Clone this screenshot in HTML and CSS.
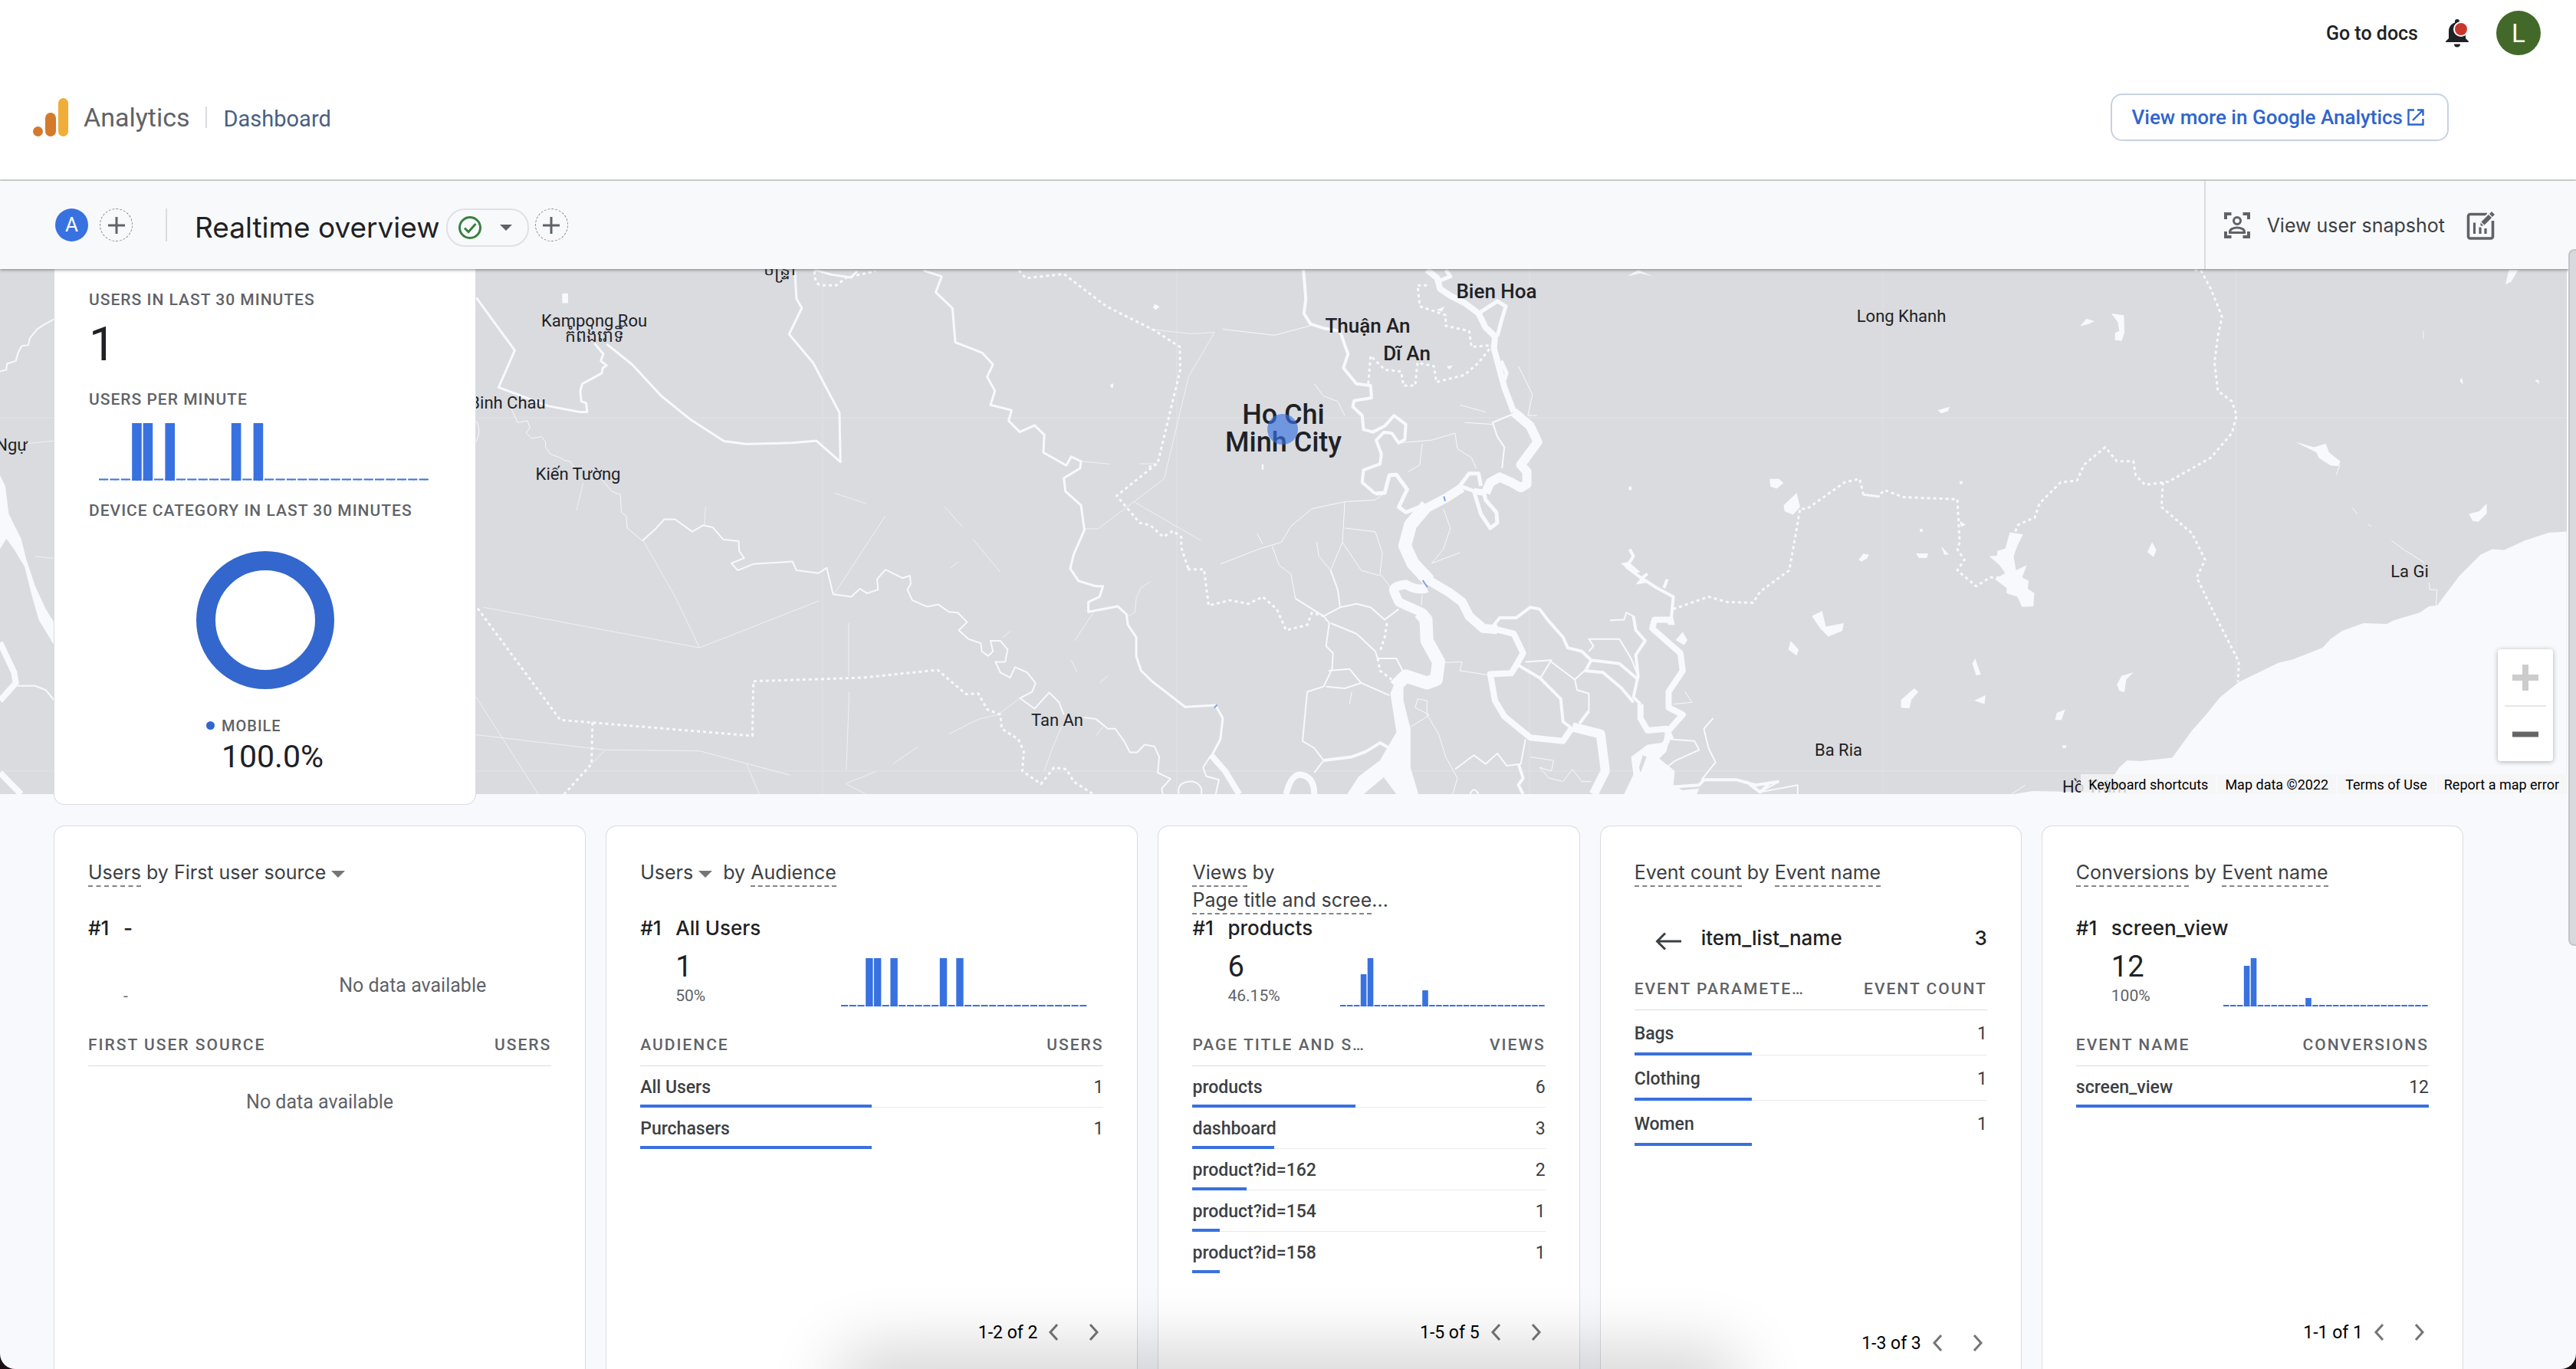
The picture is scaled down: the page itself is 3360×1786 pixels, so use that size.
FILE: index.html
```html
<!DOCTYPE html>
<html lang="en">
<head>
<meta charset="utf-8">
<meta name="viewport" content="width=device-width, initial-scale=1">
<title>Analytics - Realtime overview</title>
<link rel="stylesheet" href="styles.css">
</head>
<body>
<div class="window">
  <header class="masthead">
    <div class="account-bar">
      <a class="docs-link" href="#docs">Go to docs</a>
      <button class="icon-button" type="button" aria-label="Notifications">
        <svg width="30" height="38" viewBox="0 0 30 38"><path fill="#202124" d="M15 1a3 3 0 0 1 3 3v1.500C23 7 26 11.500 26 17v9l4 4v1H0v-1l4-4v-9C4 11.500 7 7 12 5.500V4a3 3 0 0 1 3-3zM11 33.500h8a4 4 0 0 1-8 0z"/><circle cx="20" cy="14" r="10" fill="#fff"/><circle cx="20" cy="14" r="8" fill="#c9372c"/></svg>
      </button>
      <button class="profile" type="button" aria-label="Profile">L</button>
    </div>
    <div class="brand-bar">
      <svg width="46" height="50" viewBox="0 0 46 50"><rect x="33" width="13" height="50" rx="6.500" fill="#f0ad3a"/><rect x="16" y="19" width="14" height="31" rx="7" fill="#d5792c"/><circle cx="6.500" cy="43.500" r="6.500" fill="#d5792c"/></svg>
      <span class="brand-name">Analytics</span>
      <span class="brand-rule"></span>
      <a class="brand-section" href="#dashboard">Dashboard</a>
      <a class="more-link" href="#analytics">View more in Google Analytics
        <svg width="22" height="22" viewBox="0 0 22 22" fill="none" stroke="#2f65cc" stroke-width="2.400"><path d="M9 1.500H1.500v19h19V13M13 1.500h7.500V9M20.500 1.500 7 15"/></svg>
      </a>
    </div>
  </header>

  <div class="toolbar">
    <span class="segment">A</span>
    <button class="add" type="button" aria-label="Add comparison"><svg width="22" height="22" viewBox="0 0 22 22" stroke="#5f6368" stroke-width="3"><path d="M11 0v22M0 11h22"/></svg></button>
    <span class="toolbar-rule"></span>
    <h1>Realtime overview</h1>
    <button class="status" type="button" aria-label="Data quality">
      <svg width="30" height="30" viewBox="0 0 30 30" fill="none" stroke="#388043" stroke-width="3"><circle cx="15" cy="15" r="13.500"/><path d="M8 15.500l5 5L22.500 10"/></svg>
      <svg width="16" height="8" viewBox="0 0 16 8"><path fill="#5f6368" d="M0 0h16L8 8z"/></svg>
    </button>
    <button class="add" type="button" aria-label="Add card"><svg width="22" height="22" viewBox="0 0 22 22" stroke="#5f6368" stroke-width="3"><path d="M11 0v22M0 11h22"/></svg></button>
    <div class="tools">
      <button class="snapshot" type="button">
        <svg width="34" height="34" viewBox="0 0 34 34" fill="none" stroke="#5f6368" stroke-width="3"><path stroke-width="4" d="M2 9V2h7.500M24.500 2H32v7M32 25v7h-7.500M9.500 32H2v-7"/><circle cx="17" cy="11" r="4.500"/><path d="M7.500 26.500v-1c0-3.500 5-5.500 9.500-5.500s9.500 2 9.500 5.500v1z"/></svg>
        View user snapshot
      </button>
      <button class="icon-button" type="button" aria-label="Customize report">
        <svg width="37" height="38" viewBox="0 0 37 38" fill="none" stroke="#5f6368" stroke-width="3.600"><path d="M27 4.500H5a2.500 2.500 0 0 0-2.500 2.500V33.500A2.500 2.500 0 0 0 5 36h27a2.500 2.500 0 0 0 2.500-2.500V13"/><path stroke-width="3.200" d="M10.500 15.500v14.500M18 21.500V30M25 23v7"/><path stroke="#f8f9fb" stroke-width="10" d="M18 20 36 2"/><path stroke-width="6" d="M21.500 16.500 31 7"/><path fill="#5f6368" stroke="none" d="M18.500 15.500v4h4z"/><path stroke-width="5.500" d="M32 6 35 3"/></svg>
      </button>
    </div>
  </div>

  <main class="stage">
    <section class="map" aria-label="Users by location">
      <svg class="map-canvas" viewBox="0 351 3348 685" preserveAspectRatio="xMidYMid slice">
        <rect class="land" y="351" width="3348" height="685"/>
        <path class="tile" d="M0 545H3348M0 1006H3348M1073 351V1036M1535 351V1036M1995 351V1036M2456 351V1036M2917 351V1036"/>
        <g transform="translate(0 340) scale(.4592)">
          <path class="w3" d="M0 315 18 310 20 293 45 285 52 260 62 242 80 240 85 220 105 195 125 182 155 165"/>
          <path class="w1" d="M72 520 155 512M100 840 155 846"/>
          <path class="water" d="M0 610 15 640 25 720 60 790 75 850 100 925 130 990 155 1030V1095L110 1020 90 950 70 870 40 820 18 790 0 820Z"/>
          <path class="w8" d="M0 1085 40 1170 45 1200 0 1250M0 1455 60 1516"/>
          <path class="w3" d="M50 1208 100 1208 130 1220 155 1250"/>
        </g>
        <g transform="translate(600 340) scale(.6378 .4592)">
          <path class="w4" d="M33 105 112 255 79 360 180 413 245 430 260 430 258 405 248 400 246 370 250 350 270 335 290 320 292 305 300 298 288 285 293 265 275 235M300 237 352 295 412 385 470 450 540 513 585 521 680 518 729 512 778 572 776 432 722 290 673 209 699 135 688 108 685 30M725 26 760 40 800 48 812 30"/>
          <path class="w2" d="M33 455Q45 480 33 515M103 415 118 460 138 455 143 475 135 490 147 505 167 500 175 515 175 530 185 550 205 560 215 568 225 570 238 600M290 622 310 655 328 665 330 715 340 725 342 760 373 796"/>
          <path class="w3" d="M373 796 400 762 418 735 440 735 475 770 497 752 517 758 538 792 570 797 571 825 581 845 555 860 568 880 600 862 680 855 688 880 733 888 750 873 763 948 800 955 818 932 832 945 855 935 853 905 870 878 905 902 920 895 922 918 915 935 925 965 955 983 978 977 1000 998 1018 1000 1037 1027 1020 1050 1040 1075 1065 1087 1067 1110 1080 1123 1090 1110 1085 1080 1105 1080 1120 1105 1115 1140 1095 1140 1105 1170 1125 1185 1135 1155 1160 1170 1177 1200 1170 1225 1145 1243 1175 1273 1190 1250 1205 1227 1225 1255 1235 1290M1275 1298 1300 1302 1325 1330 1340 1330 1358 1365 1370 1397 1385 1397 1400 1375 1420 1380 1430 1410 1427 1455 1453 1472 1435 1500 1437 1516M1470 1516Q1465 1478 1500 1480Q1520 1490 1516 1516"/>
          <path class="w4" d="M948 28 985 45 973 90 1007 135 1013 232 1068 262 1090 295 1078 330 1094 370 1085 410 1128 425 1122 455 1145 487 1175 468 1195 495 1193 545 1240 582 1250 557 1270 570 1268 590 1235 618 1238 655 1270 695 1277 765 1255 835 1248 875 1265 910 1300 925 1315 925 1308 955 1285 970 1285 998 1345 982 1363 1005 1366 1035 1383 1070 1383 1125 1393 1165 1415 1195 1455 1238 1483 1268 1545 1263 1560 1300 1555 1360 1538 1405"/>
          <path class="dots" d="M725 30Q725 70 740 70L770 70 790 48 850 30M1143 28 1157 50 1235 38 1322 130 1420 198 1472 245 1473 310 1427 575 1343 668 1390 745 1412 752 1438 785 1458 768 1475 785 1475 815 1490 877M36 988 205 1305 598 1350 600 1195 822 1185 977 1163 1035 1232 1060 1230 1078 1275 1105 1290 1108 1330 1142 1360 1153 1395 1150 1450 1188 1487 1215 1440 1240 1445 1255 1480 1295 1516M271 1312 269 1430 213 1516"/>
          <path class="w1" d="M48 985 490 1100 735 966M375 796 440 955 490 1100M33 1240 160 1516M33 1347 296 1390 490 1393 675 1462M870 725 765 948M990 698 1028 757M1048 790 1105 885M765 660 830 690M252 632 238 710M502 700 500 750M795 1030V1180M796 1225 790 1447M296 1392 269 1430M586 1430 612 1516M1270 570 1330 578M1390 577H1425M1412 195 1495 208 1543 204 1490 330 1440 620 1305 762 1278 762M1378 685 1515 795M1296 998 1257 1080M1412 912 1392 930 1383 960 1380 1000 1366 1010M1230 1325 1210 1390 1195 1450M1145 1243 1100 1290 1060 1303 1000 1345M935 1383 885 1430M1250 1135 1262 1170M1315 1325 1300 1350M1020 855 1003 873M1125 1053 1108 1073M1325 1180 1308 1200M790 1485 850 1452M790 1487 830 1516"/>
          <path class="water" d="M209 93h12v28h-12zM1422 124l8 6-7 10-6-7zM1330 352l6-3v12h-5zM1408 582l7 0-5 12z"/>
        </g>
        <g transform="translate(1500 340) scale(.6122 .4592)">
          <path class="w5" d="M327 26 332 110 328 150 342 180 370 192 405 200 415 240 422 265 412 305 440 350 470 355 472 390 435 398 432 415 452 440 455 480 475 487 500 470 520 440 545 465 543 508 530 518 515 490 498 488 482 510 493 550 490 578 455 595 452 630 480 662"/>
          <path class="w6" d="M480 662 500 660 510 610 525 608 548 650 530 700 545 715 575 700M630 26 640 45 612 60M700 150 740 115 758 130 750 165 740 215M690 655 660 640 680 605 700 605 705 640M690 655 705 720 725 760 740 745 738 715 715 680 712 660M748 285 760 320 752 350"/>
          <path class="w8" d="M590 26 612 50 618 80 640 100 670 120 700 150 715 190 735 215 733 250 745 310 755 360 775 430M715 660 690 655M730 1045 775 1060 795 1115 780 1150 770 1172 725 1175 735 1250 755 1295 810 1355 880 1365 900 1325"/>
          <path class="w12" d="M775 430 810 470 826 515 790 580 803 600 803 635 790 645 770 630 745 615 725 630 715 660M665 645 630 675 580 710M590 905 640 945 665 970 680 1010 710 1045 740 1048M590 930Q570 940 545 920Q515 925 520 940L530 970 580 1000M900 1325 960 1345 970 1450 945 1516"/>
          <path class="w17" d="M590 695 555 750 543 810 560 860 595 910M575 1000 588 1020 590 1080 615 1140 610 1190 590 1200 545 1180 522 1210"/>
          <path class="water" d="M512 1230 520 1205 540 1200 540 1250 555 1330 555 1440 572 1516H525L498 1468 455 1516H420L445 1465 490 1420 505 1385 525 1340ZM1025 1410 1060 1375 1090 1370 1110 1345 1100 1395 1085 1415 1118 1450 1115 1490 1135 1505 1170 1500 1165 1516H1010L1030 1460Z"/>
          <path class="land" d="M1050 1405 1058 1410 1045 1455 1042 1440Z"/>
          <path class="w8" d="M1100 1370 1105 1335 1135 1290 1105 1270 1105 1225 1135 1165 1130 1115 1100 1080 1070 1045 1075 1020 1110 1020M1110 1360 1100 1330 1060 1335 1045 1300 1045 1260"/>
          <path class="w5" d="M1045 1260 1030 1240 1040 1180 1035 1120 1055 1080 1035 1050 1030 1010M1110 1025 1115 955 1080 930 1045 900 1015 870 1030 840 1022 820M1045 905 1060 890M1095 930 1102 905M730 1040 745 1015 780 1015 810 985 830 990 850 1025 880 1070 890 1100 920 1110 940 1135 930 1160M935 1280 915 1315M940 1135 1000 1145 1040 1190M925 1165 965 1170 1005 1215 1030 1255M785 1150 830 1185 875 1245 880 1310 895 1325M370 1420 430 1410 460 1395 490 1370 510 1385M785 1430 795 1470 785 1490 795 1516M1115 1495 1170 1490 1180 1475 1250 1475 1290 1490 1340 1480M1270 1480 1300 1510 1320 1485"/>
          <path class="w8" d="M290 1516Q300 1460 320 1460Q350 1465 350 1516M130 1405 160 1450 190 1516"/>
          <path class="w3" d="M930 1160 905 1190 910 1220 935 1230 935 1280M1030 1010 1015 1000 1010 1020 980 1022M935 1110 945 1095 935 1075 1000 1075 1025 1130 1040 1180M830 1190 855 1135 800 1140M855 1140 905 1190M382 1030 375 1095 390 1115 388 1160 370 1210 335 1225 325 1365 350 1385 370 1420 350 1455M370 1010 382 1030M385 1030 440 1060 480 1110 485 1130 525 1130 540 1170M405 985 440 975 470 985 500 1020 530 990M375 1210 415 1215 450 1200 510 1235M380 1165 425 1160 450 1200M310 960 370 1010 405 985 400 935 385 880M1175 1475 1205 1425 1190 1385 1180 1330 1200 1300M650 1445 690 1405 715 1430 740 1400 760 1435 790 1430 800 1360M130 1405 113 1440 120 1465 147 1475 140 1516M775 435 730 460 740 500 755 530 750 590M1110 1360 1160 1365 1170 1390 1120 1420 1100 1440M682 1516Q690 1490 700 1516M1340 1480 1300 1510 1380 1490 1380 1516"/>
          <path class="w2" d="M150 862 235 818 280 800 300 755 345 705 415 685 480 680 500 660M260 810 275 865 300 890 310 960M385 880 410 800 415 685M415 760 480 770 495 830 490 890 520 940M410 800 450 880 490 895M355 800 360 840 385 880M530 518 600 510 650 490 655 535 685 560 695 590M580 520 575 580 550 600M785 300 800 340 815 380 805 440 825 440M625 705 640 760 625 820 600 860 660 830M350 350 370 385 400 400 415 440M155 195 265 212 342 185M620 1142 665 1140 660 1165 725 1178M555 1325 585 1300 595 1290 565 1270 570 1245 590 1250 590 1290 615 1345 630 1410 655 1470 645 1516M810 1410 860 1420 855 1450 830 1440 850 1470 880 1480 900 1445 920 1480 940 1480M1115 1260 1155 1255 1140 1225M660 410 715 430M670 460 730 465M240 805 228 775M425 1260 430 1225M580 950 578 980"/>
          <path class="dots" d="M590 70 570 70 575 130 630 155 630 185 680 200 685 245 730 240 700 290 670 325 610 345 605 300 570 290 565 355 540 355 535 315 500 310 470 270 465 350M80 877 115 877 125 980 170 965 210 975 240 955 270 990 290 1050 335 1035 345 1000 370 1010M1115 990 1190 955 1230 970 1285 972 1300 940 1362 880 1378 760 1385 705 1400 705 1480 630 1512 620 1520 665 1555 670M505 1030 500 1070 490 1110M485 1130 490 1165 515 1190"/>
          <path class="water" d="M1320 620 1340 620 1350 632 1335 648 1322 642ZM1350 695 1378 660 1385 700 1370 722 1352 712ZM1410 1010 1432 995 1440 1040 1478 1030 1475 1052 1445 1068 1428 1045ZM1365 1080 1382 1105 1378 1122 1360 1105ZM1510 848 1530 832 1528 846 1516 855ZM1120 1078 1135 1055 1145 1078 1138 1092ZM1003 860 1020 856 1045 885 1030 888ZM1035 920 1050 895 1060 915ZM1095 1015 1115 1015 1118 1035 1105 1035ZM8 124 20 132 12 140ZM632 300 645 298 638 310ZM610 140 628 130 622 145ZM1018 44 1040 26 1070 44 1045 36ZM1020 642h6v10h-6zM238 578h4v16h-4z"/>
          <path class="bridge" d="M626 670 629 683M581 908 591 928M137 1270 143 1262"/>
        </g>
        <g transform="translate(2400 340) scale(.6122 .4592)">
          <path class="water" d="M1548 770 1510 773 1460 795 1415 822 1390 820 1365 835 1320 895 1272 980 1255 982 1235 1000 1180 1022 1165 1032 1115 1030 1070 1052 1045 1075 1028 1100 965 1133 935 1142 850 1197 810 1240 780 1290 750 1335 708 1412 640 1422 612 1420 595 1440 575 1480 540 1510 410 1507 370 1516H1548Z"/>
          <path class="water" d="M362 772 390 778 378 810 370 840 375 880 398 865 388 900 402 910 400 932 414 945 412 982 388 984 378 955 355 945 355 930 330 905 352 888 340 865 318 840 335 838 335 825 352 818ZM512 186 525 165 542 172 530 180ZM578 150 605 155 606 205 600 228 586 226 586 205 595 200 592 175ZM970 515 1010 530 1035 520 1042 545 1066 570 1062 584 1045 582 1020 560 1015 545ZM1340 720 1362 712 1378 690 1378 718 1360 742 1348 740ZM665 800 674 822 668 842 655 828ZM130 1270 130 1248 158 1215 167 1225 152 1248 148 1272ZM595 1222 590 1205 600 1180 625 1170 610 1190 606 1226ZM286 1250 310 1235 308 1260ZM458 1305 462 1285 480 1275 472 1305ZM1418 68 1425 26H1445L1430 60ZM208 425 234 415 230 428 216 434ZM162 832 188 832 185 845 168 845ZM216 812 232 835 222 835ZM282 1145 288 1130 300 1176 290 1178ZM40 850 50 832 62 838 46 855ZM1320 342 1325 332 1328 352ZM1480 340 1488 338 1490 350ZM255 740 268 750 258 757ZM170 762h6v9h-6zM255 626h6v9h-6zM474 1377h8v8h-8z"/>
          <path class="w2" d="M1175 795 1200 820 1245 858M1255 915 1257 935 1272 935 1270 980M1092 702 1102 720M1125 748 1132 756M1065 580 1057 610M1243 222V200M395 1490 365 1516"/>
          <path class="dots" d="M50 665 80 670 95 652 135 672 250 678 255 800 250 820 265 850 250 880 290 925 320 900 340 900M755 26 770 30 790 80 814 160 805 215 798 290 805 370 835 400 845 440 835 490 790 560 700 628 650 637 630 610 625 570 590 570 565 530 520 580 505 625 470 630 425 690 415 730 380 750 370 780M688 630 685 700 750 775 778 850 760 900 800 1010 850 1140 848 1197"/>
        </g>
        <g class="place">
          <text x="1017" y="359">ចន្ទ្រា</text>
          <text x="775" y="426">Kampong Rou</text>
          <text x="775" y="446">កំពង់រោទិ៍</text>
          <text x="662" y="533">Binh Chau</text>
          <text x="754" y="626">Kiến Tường</text>
          <text x="1379" y="947">Tan An</text>
          <text x="2480" y="420">Long Khanh</text>
          <text x="3143" y="753">La Gi</text>
          <text x="2398" y="986">Ba Ria</text>
          <text x="2732" y="1034">Hồ Tràm</text>
          <text x="-14" y="588">Hồng Ngự</text>
        </g>
        <g class="place town">
          <text x="1952" y="389">Bien Hoa</text>
          <text x="1784" y="434">Thuận An</text>
          <text x="1835" y="470">Dĩ An</text>
        </g>
        <g class="place city">
          <text x="1674" y="553">Ho Chi</text>
          <text x="1674" y="589">Minh City</text>
        </g>
        <circle cx="1673" cy="560" r="20" fill="#3871e0" fill-opacity=".65"/>
      </svg>

      <div class="zoom-control">
        <button type="button" aria-label="Zoom in" disabled><svg width="34" height="34" viewBox="0 0 34 34" stroke="#ccc" stroke-width="8"><path d="M17 0v34M0 17h34"/></svg></button>
        <button type="button" aria-label="Zoom out"><svg width="34" height="34" viewBox="0 0 34 34" stroke="#666" stroke-width="7"><path d="M0 17h34"/></svg></button>
      </div>
      <div class="attribution">
        <button type="button">Keyboard shortcuts</button>
        <span>Map data ©2022</span>
        <a href="#terms">Terms of Use</a>
        <a href="#report">Report a map error</a>
      </div>

      <section class="overview">
        <h2>Users in last 30 minutes</h2>
        <p class="total">1</p>
        <h2>Users per minute</h2>
        <svg class="minutes" viewBox="0 0 600 76" preserveAspectRatio="none">
          <path class="ticks" d="M8.500 75.500H600"/>
          <path class="baseline" d="M0 73.500H600"/>
          <path class="bars" d="M60 0h17.500v75H60zM80 0h17.500v75H80zM120 0h17.500v75H120zM240 0h17.500v75H240zM280 0h17.500v75H280z"/>
        </svg>
        <h2>Device category in last 30 minutes</h2>
        <svg class="donut" width="180" height="180" viewBox="0 0 180 180"><circle cx="90" cy="90" r="77.500" fill="none" stroke="#3367cd" stroke-width="25"/></svg>
        <div class="legend">
          <span class="legend-dot"></span>
          <div><span class="legend-name">Mobile</span><span class="legend-value">100.0%</span></div>
        </div>
      </section>
    </section>

    <div class="cards">
      <section class="card wide">
        <h3><span class="term">Users</span> by First user source <svg class="caret" width="18" height="9" viewBox="0 0 18 9"><path fill="#757575" d="M0 0h18L9 9z"/></svg></h3>
        <p class="leader"><span class="rank">#1</span>-</p>
        <div class="stat"><p><span class="value">&nbsp;</span><span class="share">-</span></p><p class="chart empty">No data available</p></div>
        <table><thead><tr><th>First user source</th><th>Users</th></tr></thead></table>
        <p class="empty">No data available</p>
      </section>

      <section class="card wide">
        <h3>Users <svg class="caret" width="18" height="9" viewBox="0 0 18 9"><path fill="#757575" d="M0 0h18L9 9z"/></svg>&nbsp; by <span class="term">Audience</span></h3>
        <p class="leader"><span class="rank">#1</span>All Users</p>
        <div class="stat"><p><span class="value">1</span><span class="share">50%</span></p>
          <svg class="chart" viewBox="0 0 600 63" preserveAspectRatio="none"><path class="baseline" d="M0 62H600"/><path class="bars" d="M60 0h17.500v63H60zM80 0h17.500v63H80zM120 0h17.500v63H120zM240 0h17.500v63H240zM280 0h17.500v63H280z"/></svg></div>
        <table>
          <thead><tr><th>Audience</th><th>Users</th></tr></thead>
          <tbody>
            <tr><td>All Users<span class="bar" style="width:50%"></span></td><td>1</td></tr>
            <tr><td>Purchasers<span class="bar" style="width:50%"></span></td><td>1</td></tr>
          </tbody>
        </table>
        <nav class="pager">1-2 of 2
          <button type="button" aria-label="Previous"><svg width="14" height="22" viewBox="0 0 14 22"><path d="M12 1 3 11l9 10"/></svg></button>
          <button type="button" aria-label="Next"><svg width="14" height="22" viewBox="0 0 14 22"><path d="m2 1 9 10-9 10"/></svg></button>
        </nav>
      </section>

      <section class="card">
        <h3><span class="term">Views</span> by<br><span class="term">Page title and scree</span>…</h3>
        <p class="leader"><span class="rank">#1</span>products</p>
        <div class="stat"><p><span class="value">6</span><span class="share">46.15%</span></p>
          <svg class="chart" viewBox="0 0 600 63" preserveAspectRatio="none"><path class="baseline" d="M0 62H600"/><path class="bars" d="M60 21h17v42H60zM80 0h17v63H80zM240 42h17v21H240z"/></svg></div>
        <table>
          <thead><tr><th>Page title and s…</th><th>Views</th></tr></thead>
          <tbody>
            <tr><td>products<span class="bar" style="width:46.15%"></span></td><td>6</td></tr>
            <tr><td>dashboard<span class="bar" style="width:23.08%"></span></td><td>3</td></tr>
            <tr><td>product?id=162<span class="bar" style="width:15.38%"></span></td><td>2</td></tr>
            <tr><td>product?id=154<span class="bar" style="width:7.69%"></span></td><td>1</td></tr>
            <tr><td>product?id=158<span class="bar" style="width:7.69%"></span></td><td>1</td></tr>
          </tbody>
        </table>
        <nav class="pager">1-5 of 5
          <button type="button" aria-label="Previous"><svg width="14" height="22" viewBox="0 0 14 22"><path d="M12 1 3 11l9 10"/></svg></button>
          <button type="button" aria-label="Next"><svg width="14" height="22" viewBox="0 0 14 22"><path d="m2 1 9 10-9 10"/></svg></button>
        </nav>
      </section>

      <section class="card drilled">
        <h3><span class="term">Event count</span> by <span class="term">Event name</span></h3>
        <div class="drill">
          <button class="icon-button" type="button" aria-label="Back"><svg width="34" height="24" viewBox="0 0 34 24" fill="none" stroke="#3c4043" stroke-width="3"><path d="M34 12H3M13 1.500 2.500 12 13 22.500"/></svg></button>
          <span>item_list_name</span><span class="drill-count">3</span>
        </div>
        <table>
          <thead><tr><th>Event paramete…</th><th>Event count</th></tr></thead>
          <tbody>
            <tr><td>Bags<span class="bar" style="width:33.33%"></span></td><td>1</td></tr>
            <tr><td>Clothing<span class="bar" style="width:33.33%"></span></td><td>1</td></tr>
            <tr><td>Women<span class="bar" style="width:33.33%"></span></td><td>1</td></tr>
          </tbody>
        </table>
        <nav class="pager">1-3 of 3
          <button type="button" aria-label="Previous"><svg width="14" height="22" viewBox="0 0 14 22"><path d="M12 1 3 11l9 10"/></svg></button>
          <button type="button" aria-label="Next"><svg width="14" height="22" viewBox="0 0 14 22"><path d="m2 1 9 10-9 10"/></svg></button>
        </nav>
      </section>

      <section class="card">
        <h3><span class="term">Conversions</span> by <span class="term">Event name</span></h3>
        <p class="leader"><span class="rank">#1</span>screen_view</p>
        <div class="stat"><p><span class="value">12</span><span class="share">100%</span></p>
          <svg class="chart" viewBox="0 0 600 63" preserveAspectRatio="none"><path class="baseline" d="M0 62H600"/><path class="bars" d="M60 10h17v53H60zM80 0h17v63H80zM240 52h17v11H240z"/></svg></div>
        <table>
          <thead><tr><th>Event name</th><th>Conversions</th></tr></thead>
          <tbody><tr><td>screen_view<span class="bar" style="width:100%"></span></td><td>12</td></tr></tbody>
        </table>
        <nav class="pager">1-1 of 1
          <button type="button" aria-label="Previous"><svg width="14" height="22" viewBox="0 0 14 22"><path d="M12 1 3 11l9 10"/></svg></button>
          <button type="button" aria-label="Next"><svg width="14" height="22" viewBox="0 0 14 22"><path d="m2 1 9 10-9 10"/></svg></button>
        </nav>
      </section>
    </div>
  </main>
  <div class="scroll-thumb"></div>
  <div class="dock-shadow"></div>
</div>
</body>
</html>
```
FILE: styles.css
```css
* { box-sizing: border-box; }

html { background: #1c1012; }

body {
  margin: 0;
  font-family: Roboto, "Noto Sans", sans-serif;
  font-size: 25px;
  color: #202124;
}

h1, h2, h3, p { margin: 0; font-weight: 400; }
a { color: inherit; text-decoration: none; }
button { font: inherit; color: inherit; background: none; border: 0; padding: 0; }
svg { display: block; flex: none; }

.window {
  position: relative;
  display: flex;
  flex-direction: column;
  min-height: 100vh;
  overflow: hidden;
  background: #f8f9fc;
  border-radius: 0 0 20px 20px;
}

/* Header */
.masthead { background: #fff; border-bottom: 2px solid #dadce0; }

.account-bar {
  display: flex;
  align-items: center;
  justify-content: flex-end;
  gap: 36px;
  padding: 14px 46px 0;
}
.docs-link { font-weight: 500; }
.profile {
  width: 58px;
  height: 58px;
  border-radius: 50%;
  background: #43692a;
  color: #fff;
  font-size: 33px;
}

.brand-bar {
  display: flex;
  align-items: center;
  height: 162px;
  padding: 0 166px 0 43px;
}
.brand-name { margin-left: 20px; font-size: 34px; color: #5f6368; }
.brand-rule { width: 2px; height: 28px; margin: 0 22px 0 20px; background: #dadce0; }
.brand-section { padding-top: 4px; font-size: 29px; color: #4a6082; }
.more-link {
  display: flex;
  align-items: center;
  gap: 6px;
  margin-left: auto;
  padding: 0 30px 0 26px;
  height: 62px;
  border: 2px solid #c8d3e0;
  border-radius: 15px;
  color: #2f65cc;
  font-size: 26px;
  font-weight: 500;
}

/* Report toolbar */
.toolbar {
  position: relative;
  z-index: 1;
  display: flex;
  align-items: center;
  height: 115px;
  padding-left: 72px;
  background: #f8f9fb;
  box-shadow: 0 1px 4px rgba(60, 64, 67, .6);
}
.segment {
  width: 43px;
  height: 43px;
  margin-right: 15px;
  border-radius: 50%;
  background: #3871e0;
  color: #fff;
  font-size: 26px;
  line-height: 43px;
  text-align: center;
}
.add {
  display: grid;
  place-items: center;
  width: 43px;
  height: 43px;
  border: 1px dashed #80868b;
  border-radius: 50%;
}
.toolbar-rule { width: 2px; height: 43px; margin: 0 36px 0 43px; background: #dadce0; }
.toolbar h1 { font-family: Inter, Roboto, sans-serif; font-size: 37px; line-height: 48px; padding-top: 6px; }
.status {
  display: flex;
  align-items: center;
  gap: 24px;
  height: 50px;
  margin: 6px 8px 0;
  padding: 0 20px 0 14px;
  border: 2px solid #dfe1e5;
  border-radius: 24px;
}
.tools {
  display: flex;
  align-items: center;
  align-self: stretch;
  gap: 28px;
  margin-left: auto;
  padding: 0 106px 0 24px;
  border-left: 2px solid #dadce0;
}
.snapshot {
  display: flex;
  align-items: center;
  gap: 22px;
  font-family: Inter, Roboto, sans-serif;
  font-size: 25px;
  color: #3c4043;
}

/* Map */
.stage { display: flex; flex-direction: column; flex: 1; }
.map { position: relative; margin-right: 12px; }
.map-canvas { width: 100%; height: 685px; }
.land { fill: #dadbdf; }
.water { fill: #f8f9fc; }
.tile { fill: none; stroke: #e1e2e6; stroke-width: 1; }
.w1, .w2, .w3, .w4, .w5, .w6, .w8, .w12, .w17, .dots, .bridge {
  fill: none;
  stroke: #f8f9fc;
  stroke-linejoin: round;
  vector-effect: non-scaling-stroke;
}
.w1 { stroke-width: 1; stroke-opacity: .7; }
.w2 { stroke-width: 1; }
.w3 { stroke-width: 2; }
.w4 { stroke-width: 3; }
.w5 { stroke-width: 4; }
.w6 { stroke-width: 5; }
.w8 { stroke-width: 8; }
.w12 { stroke-width: 12; }
.w17 { stroke-width: 17; }
.dots { stroke-width: 3; stroke-dasharray: 4 4; }
.bridge { stroke: #7da2ea; stroke-width: 2; }
.place { font-size: 22px; text-anchor: middle; fill: #202124; }
.town { font-size: 26px; font-weight: 500; }
.city { font-size: 36px; font-weight: 500; }

.zoom-control {
  position: absolute;
  right: 18px;
  bottom: 43px;
  display: grid;
  width: 72px;
  padding: 0 9px;
  background: #fff;
  border-radius: 4px;
  box-shadow: 0 1px 6px rgba(0, 0, 0, .3);
}
.zoom-control button { display: grid; place-items: center; height: 73px; }
.zoom-control button + button { border-top: 2px solid #e6e6e6; }

.attribution {
  position: absolute;
  right: 0;
  bottom: 0;
  display: flex;
  gap: 2px;
  font-size: 18px;
  line-height: 24px;
  color: #000;
}
.attribution > * { padding: 2px 10px 0; background: rgba(245, 245, 245, .8); }

.overview {
  position: absolute;
  top: 0;
  left: 70px;
  width: 551px;
  padding: 24px 45px 40px;
  background: #fff;
  border: 1px solid #dadce0;
  border-top: 0;
  border-radius: 0 0 14px 14px;
}
.overview h2 {
  font-size: 21px;
  line-height: 32px;
  font-weight: 500;
  letter-spacing: 1px;
  text-transform: uppercase;
  color: #5f6368;
}
.total { margin: 6px 0 20px; font-size: 62px; line-height: 72px; }
.minutes { width: 432px; height: 76px; margin: 15px 0 22px 13px; }
.donut { margin: 37px auto 30px; }
.legend { display: flex; justify-content: center; gap: 9px; }
.legend-dot { width: 11px; height: 11px; margin-top: 12px; border-radius: 50%; background: #3367cd; }
.legend-name {
  display: block;
  font-size: 20px;
  line-height: 36px;
  font-weight: 500;
  letter-spacing: 1px;
  text-transform: uppercase;
  color: #5f6368;
}
.legend-value { display: block; font-size: 41px; line-height: 44px; }

.bars { fill: #3871e0; }
.baseline { fill: none; stroke: #3871e0; stroke-width: 2; stroke-dasharray: 17 3; }
.ticks { fill: none; stroke: #dadce0; stroke-width: 1; stroke-dasharray: 3 17; }

/* Report cards */
.cards {
  display: grid;
  grid-template-columns: 694fr 694fr 550fr 550fr 550fr;
  gap: 26px;
  flex: 1;
  padding: 41px 147px 0 70px;
}
.card {
  display: flex;
  flex-direction: column;
  padding: 42px 44px 33px;
  background: #fff;
  border: 1px solid #dadce0;
  border-bottom: 0;
  border-radius: 14px 14px 0 0;
}
.card h3, .leader, .drill { font-family: Inter, Roboto, sans-serif; }
.card h3 { min-height: 72px; font-size: 25px; line-height: 36px; color: #3c4043; }
.term { padding-bottom: 2px; border-bottom: 2px dashed #80868b; }
.caret { display: inline-block; vertical-align: middle; }
.leader { display: flex; font-size: 26px; line-height: 38px; font-weight: 500; }
.rank { width: 46px; }
.stat { display: flex; justify-content: space-between; padding-top: 9px; }
.stat > p:first-child { padding-left: 46px; }
.value { display: block; font-size: 38px; line-height: 44px; }
.share { display: block; font-size: 21px; line-height: 32px; color: #5f6368; }
.chart { width: 268px; height: 63px; margin-top: 11px; }
.wide .chart { width: 322px; margin-right: 20px; }
.empty { line-height: 72px; text-align: center; color: #5f6368; }
table + .empty { margin-top: 11px; }

table { width: 100%; margin-top: 20px; border-collapse: separate; border-spacing: 0; }
tr { position: relative; }
th {
  height: 56px;
  padding: 0;
  border-bottom: 1px solid #dadce0;
  font-size: 21px;
  font-weight: 500;
  letter-spacing: 2px;
  text-align: left;
  text-transform: uppercase;
  color: #5f6368;
}
td {
  height: 54px;
  padding: 2px 0 0;
  border-bottom: 1px solid #e8eaed;
  font-size: 23px;
  color: #3c4043;
}
td:first-child { font-weight: 500; }
tr:last-child td { border-bottom-color: transparent; }
th:last-child, td:last-child { text-align: right; }
.bar { position: absolute; left: 0; bottom: 0; height: 4px; background: #3871e0; }

.drill {
  display: flex;
  align-items: center;
  gap: 26px;
  height: 62px;
  padding-left: 27px;
  font-size: 26px;
  font-weight: 500;
}
.drill svg { margin-top: 10px; }
.drill-count { margin-left: auto; }
.drilled table { margin-top: 8px; }
.drilled td { height: 59px; }
.drilled { padding-bottom: 19px; }

.pager {
  display: flex;
  align-items: center;
  justify-content: flex-end;
  gap: 14px;
  height: 30px;
  margin-top: auto;
  padding-right: 5px;
  font-size: 23px;
  color: #000;
}
.pager button + button { margin-left: 25px; }
.pager path { fill: none; stroke: #757575; stroke-width: 3; }

/* Overlays */
.scroll-thumb {
  position: absolute;
  top: 325px;
  right: 0;
  z-index: 2;
  width: 10px;
  height: 909px;
  border: 2px solid #c4c5c8;
  border-right: 0;
  border-radius: 8px 0 0 8px;
  background: #d8d9dc;
}
.dock-shadow {
  position: absolute;
  bottom: -40px;
  left: 33%;
  right: 33%;
  height: 40px;
  border-radius: 40px;
  box-shadow: 0 0 90px 20px rgba(0, 0, 0, .2);
  pointer-events: none;
}
```
